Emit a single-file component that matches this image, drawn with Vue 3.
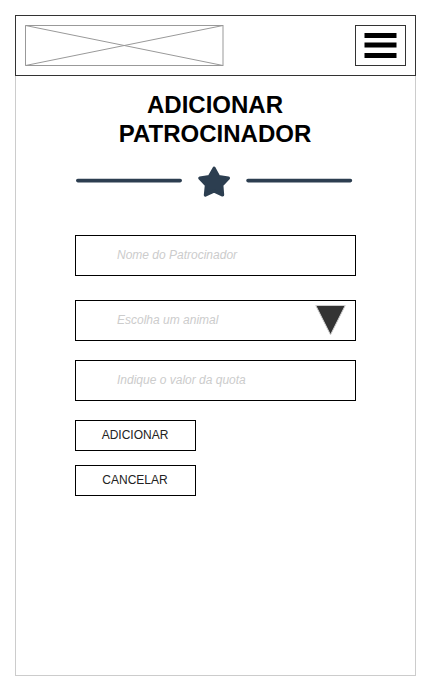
<script setup>
const fields = [
  { label: 'Nome do Patrocinador', type: 'name' },
  { label: 'Escolha um animal', type: 'select' },
  { label: 'Indique o valor da quota', type: 'value' },
]
const actions = ['ADICIONAR', 'CANCELAR']
</script>

<template>
  <main class="screen">
    <header class="bar">
      <svg class="logo" width="199" height="41" viewBox="0 0 199 41">
        <path d="M.5 .5L198 40.5M.5 40.5L198 .5" fill="none" stroke="#999" />
        <path d="M198 .5H.5V40.5H198" fill="none" stroke="#999" />
        <path d="M198 0V41" fill="none" stroke="#999" />
      </svg>
      <button class="menu" aria-label="Menu">
        <svg width="49" height="39" viewBox="0 0 49 39">
          <path d="M8.5 7h32v5h-32zM8.5 16.5h32v5h-32zM8.5 27h32v5h-32z" fill="#000" />
        </svg>
      </button>
    </header>

    <h1 class="title">ADICIONAR<br>PATROCINADOR</h1>

    <svg class="divider" width="281" height="36" viewBox="0 0 281 36">
      <g stroke="#2c3e50" stroke-linecap="round" stroke-width="3.6">
        <path d="M2.8 16.6H105.2M173 16.6H275.4" />
      </g>
      <path
        d="M139.1 4.2L143.6 12.6L153.4 14.2L146.8 21.2L147.6 31L139.1 27L130.4 31L131.4 21.2L124.8 14.2L134.4 12.6Z"
        fill="#2c3e50" stroke="#2c3e50" stroke-width="3.2" stroke-linejoin="round"
      />
    </svg>

    <form class="form" @submit.prevent>
      <div v-for="field in fields" :key="field.type" class="field" :class="field.type">
        <span>{{ field.label }}</span>
        <svg v-if="field.type === 'select'" class="arrow" width="32" height="33" viewBox="0 0 32 33">
          <path d="M.8 2.5H30.2L15.5 31.8Z" fill="#333" stroke="#ccc" />
        </svg>
      </div>
      <button v-for="action in actions" :key="action" class="action" type="button">{{ action }}</button>
    </form>
  </main>
</template>

<style>
body {
  background: #fff;
}
</style>

<style scoped>
.screen {
  box-sizing: border-box;
  width: 401px;
  height: 661px;
  margin: 15px;
  border: 1px solid #ccc;
  font-family: "Liberation Sans", Arial, sans-serif;
  display: flow-root;
}
.bar {
  box-sizing: border-box;
  width: 401px;
  height: 61px;
  margin: -1px;
  padding: 9px;
  border: 1px solid #333;
  display: flex;
  justify-content: space-between;
}
svg {
  display: block;
}
.menu {
  box-sizing: border-box;
  width: 51px;
  height: 41px;
  padding: 0;
  border: 1px solid #333;
  background: #fff;
}
.title {
  margin: 15px 0 0;
  padding-right: 1px;
  font-size: 24px;
  line-height: 29px;
  font-weight: bold;
  text-align: center;
  color: #000;
}
.divider {
  margin: 16px 0 0 59px;
}
.form {
  margin: 35px 0 0 59px;
  display: flex;
  flex-direction: column;
  align-items: flex-start;
}
.field {
  box-sizing: border-box;
  width: 281px;
  height: 41px;
  margin-bottom: 19px;
  padding: 0 8px 2px 41px;
  border: 1px solid #000;
  display: flex;
  align-items: center;
  justify-content: space-between;
  font-size: 12px;
  line-height: 14px;
  font-style: italic;
  color: #ccc;
}
.field.name {
  margin-bottom: 24px;
}
.action {
  box-sizing: border-box;
  width: 121px;
  height: 31px;
  margin: 0 0 14px;
  padding: 0 1px 2px 0;
  border: 1px solid #000;
  background: #fff;
  font-family: inherit;
  font-size: 12px;
  line-height: 14px;
  color: #222;
}
</style>
